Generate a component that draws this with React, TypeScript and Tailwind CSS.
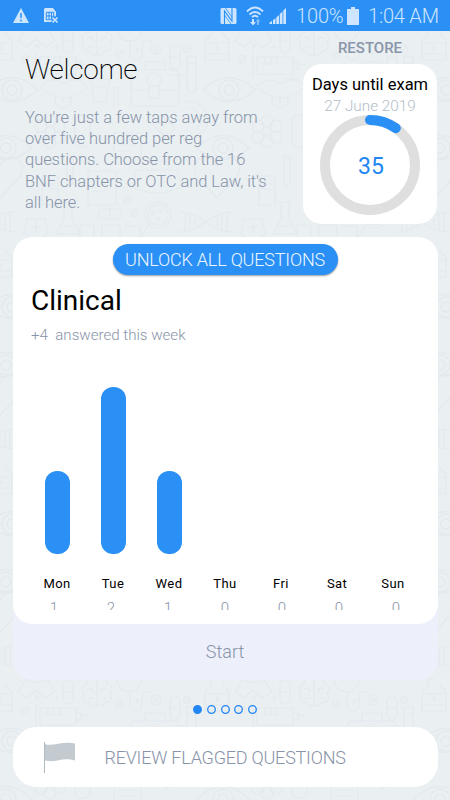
import React from 'react';

const week = [
  { day: 'Mon', count: 1 },
  { day: 'Tue', count: 2 },
  { day: 'Wed', count: 1 },
  { day: 'Thu', count: 0 },
  { day: 'Fri', count: 0 },
  { day: 'Sat', count: 0 },
  { day: 'Sun', count: 0 },
];

function MedicalPattern() {
  return (
    <svg className="absolute inset-0 h-full w-full" aria-hidden="true">
      <defs>
        <g id="cap">
          <rect x="-5" y="-12" width="10" height="24" rx="5" />
          <path d="M-5 0H5" />
        </g>
        <g id="pill">
          <circle r="3.5" />
          <path d="M-2 2L2 -2" />
        </g>
        <g id="tinyplus">
          <path d="M-2.5 0H2.5M0 -2.5V2.5" />
        </g>
        <g id="eye">
          <path d="M-26 0Q0 -25 26 0Q0 23 -26 0Z" />
          <circle r="10" />
          <circle r="5" />
        </g>
        <g id="tileart">
          <path d="M18 41l8-13q11 7 21 0l8 13-10 6-9-8-9 8z" />
          <use href="#cap" x="68" y="41" />
          <path d="M97 28v28M97 30c-5-5-11-1-10 3-6 1-6 7-3 9-3 5 0 10 5 9 2 5 7 5 8 2M97 30c5-5 11-1 10 3 6 1 6 7 3 9 3 5 0 10-5 9-2 5-7 5-8 2M87 38c3-2 6 0 6 3M107 38c-3-2-6 0-6 3M88 48q4-3 6 0M106 48q-4-3-6 0" />
          <path d="M118 27c-4 17 24 20 24 0M130 41v13c0 8 12 8 12 0v-8c0-6 8-7 10-3" />
          <circle cx="156" cy="49" r="5" />
          <circle cx="156" cy="49" r="2" />
          <use href="#pill" x="25" y="59" />
          <use href="#pill" x="119" y="54" />
          <use href="#tinyplus" x="37" y="46" />
          <use href="#tinyplus" x="57" y="47" />
          <use href="#tinyplus" x="137" y="50" />
          <path d="M40 57h36v17H40zM36 53v24M44 64h15M48 57v7M54 57v7M60 57v7M76 62h5v7h-5M81 65l9-1M67 79h15" />
          <use href="#cap" x="175" y="57" />
          <use href="#pill" x="187" y="49" />
          <path d="M211 28h12v7l6 5v20h-24V40l6-5zM205 43h24v11h-24M214 48h6M217 45v6" />
          <path d="M187 56h9v34q-5 6-9 0zM187 63h9M171 75h13" />
          <rect x="131" y="70" width="48" height="36" rx="4" />
          <path d="M145 70v-8h20v8M131 90h18M159 90h20M149 86h10v12h-10z" />
          <circle cx="154" cy="80" r="7" />
          <use href="#eye" x="229" y="90" />
          <use href="#eye" x="12" y="90" />
          <path d="M40 86q13-10 20-4 4 3 8 0 8-6 20 4-10 12-24 12T40 86zM55 96v7q8 10 16 0v-7M63 96v6" />
          <path d="M91 79h18l-3 23H94zM94 87h12M114 88v19M118 88v19M112 88h8" />
          <use href="#eye" x="6" y="148" />
          <use href="#eye" x="223" y="148" />
          <g transform="translate(50 131)">
            <circle r="5" /><circle cy="-10" r="6" /><circle cx="9" cy="-5" r="6" /><circle cx="9" cy="6" r="6" /><circle cy="11" r="6" /><circle cx="-9" cy="6" r="6" /><circle cx="-9" cy="-5" r="6" />
          </g>
          <path d="M114 133h27v31h-27zM118 139h19M118 145h19M118 151h14M118 157h19" />
          <path d="M186 101q18 1 21 15t-9 18M188 108q12 2 13 10t-6 11M152 124l14 14 9-9M162 115l12 12" />
          <path d="M75 118q12-7 15 2v23q-8 9-15 0zM97 119q-9-6-12 2" />
          <path d="M0 198l-19-20q-9-15 4-20 11-2 15 8 4-10 15-8 13 5 4 20z" />
          <path d="M217 198l-19-20q-9-15 4-20 11-2 15 8 4-10 15-8 13 5 4 20z" />
          <path d="M42 176h16v29H42zM45 184h10M45 189h10M88 171h28v34H88zM93 179h18M93 185h18M93 191h12" />
          <path d="M67 169v-11h6v25q-5 7-6 0zM65 156h10" />
          <use href="#pill" x="127" y="199" />
          <path d="M132 187q26 12 49 0l-4-17h-41zM142 170v-8h26v8" />
          <circle cx="158" cy="215" r="13" />
          <circle cx="158" cy="215" r="10" />
          <circle cx="153" cy="213" r="1.5" /><circle cx="161" cy="211" r="1.5" /><circle cx="158" cy="219" r="1.5" />
          <path d="M149 225l-8 12" />
          <rect x="98" y="209" width="24" height="10" rx="5" />
          <path d="M110 209v10" />
          <use href="#pill" x="134" y="213" />
          <path d="M180 212c23 0 28 20 53 20M180 232c23 0 28-20 53-20M185 213v18M190 214v16M195 218v8M217 218v8M222 214v16M227 212v19" />
          <path d="M64 202h8v17l8 15H56l8-15zM61 202h14M60 226h16" />
          <path d="M27 219h18l3 14-12 12-12-12zM36 222v10M31 227h10" />
          <path d="M80 225h14v18H80zM102 225h18v14h-18zM124 226h16v12h-16" />
        </g>
        <pattern id="medical" width="217" height="217" y="32" patternUnits="userSpaceOnUse">
          <g transform="translate(0 -32)" stroke="#e4e9ed" strokeWidth="1.15" fill="none" strokeLinecap="round" strokeLinejoin="round">
            <use href="#tileart" />
            <use href="#tileart" x="-217" />
            <use href="#tileart" y="217" />
            <use href="#tileart" y="-217" />
          </g>
        </pattern>
      </defs>
      <rect width="450" height="800" fill="url(#medical)" />
    </svg>
  );
}

function StatusBar() {
  return (
    <header className="relative flex h-[31px] items-center bg-[#2a90f5] text-[#cde5ff]">
      <svg className="ml-3 h-[17px] w-[18px]" viewBox="0 0 18 17">
        <path d="M9 1L17 16H1Z" fill="currentColor" />
        <path d="M9 6v5M9 12.5v2" stroke="#2a90f5" strokeWidth="1.5" />
      </svg>
      <svg className="ml-[13px] h-[17px] w-4" viewBox="0 0 16 17">
        <path d="M2 1h8l3 4v10H1V2z" fill="currentColor" />
        <path d="M3.3 5.3h7.4v7.4H3.3zM3.3 9h6M6 5v7M8.5 5v7" stroke="#2a90f5" strokeWidth="1" fill="none" />
        <path d="M9.5 9.5l5 6M14.5 9.5l-5 6" stroke="#2a90f5" strokeWidth="3.5" />
        <path d="M9.5 10.5l5 5M14.5 10.5l-5 5" stroke="currentColor" strokeWidth="1.6" />
      </svg>
      <svg className="ml-[161px] h-[18px] w-[17px]" viewBox="0 0 17 18">
        <path d="M2 1h13q1.5 0 1.5 1.5v13q0 1.5-1.5 1.5H2Q.5 17 .5 15.5v-13Q.5 1 2 1z" fill="currentColor" />
        <path d="M4.500 17V4L12 14V1" fill="none" stroke="#2a90f5" strokeWidth="1.100" />
        <path d="M5.500 1L12 10M4.500 8l6.500 9" fill="none" stroke="#2a90f5" strokeWidth=".8" />
      </svg>
      <svg className="ml-[9px] h-[20px] w-[18px]" viewBox="0 0 18 20">
        <path d="M1 5.5q8-8 16 0M3.5 8.5q5.5-5 11 0M6 11q3-2.5 6 0" fill="none" stroke="currentColor" strokeWidth="1.9" />
        <path d="M6 13v3H4l3 3.5 3-3.5H8v-3" fill="currentColor" />
        <path d="M11 19v-3.5H9.5L12 12.500l2.500 3H13V19" fill="#7fbdfa" />
      </svg>
      <svg className="ml-[5px] h-[18px] w-[18px]" viewBox="0 0 18 18">
        <path d="M.5 17v-1.5L3 14v3zM4 17v-4l2.5-1.8V17zM7.3 17V10.5L10 8v9zM10.8 17V7l2.7-2.5V17zM14.3 17V3.5L17 1v16z" fill="currentColor" />
      </svg>
      <span className="ml-[9px] w-[47px] whitespace-nowrap text-[20px] font-light leading-none tracking-[-0.15px]">100%</span>
      <svg className="ml-[4px] h-[18px] w-3" viewBox="0 0 12 18">
        <path d="M4 0h4v2h4v16H0V2h4z" fill="currentColor" />
      </svg>
      <span className="ml-[9px] whitespace-nowrap text-[20px] font-light leading-none tracking-[-0.2px]">1:04 AM</span>
    </header>
  );
}

function ExamCountdown() {
  return (
    <section className="mr-[13px] w-[134px] shrink-0 text-center">
      <div className="h-[33px] pt-[9px] text-[15px] font-medium leading-4 text-[#8995a8]">RESTORE</div>
      <div className="h-[160px] rounded-[19px] bg-white pt-[11px]">
        <h2 className="whitespace-nowrap text-[16.5px] font-normal leading-[20px] text-black">Days until exam</h2>
        <p className="h-[20px] pt-px text-[15.3px] font-light leading-[20px] text-[#b3bec9]">27 June 2019</p>
        <svg className="mx-auto block h-[100px] w-[100px]" viewBox="0 0 100 100">
          <circle cx="50" cy="50" r="45" fill="none" stroke="#dfdfdf" strokeWidth="10" />
          <path d="M50 5A45 45 0 0 1 75.8 13.2" fill="none" stroke="#2a90f5" strokeWidth="10" strokeLinecap="round" />
          <text x="51" y="59" textAnchor="middle" fontSize="23" fill="#2186f3">35</text>
        </svg>
      </div>
    </section>
  );
}

export default function App() {
  return (
    <div className="relative h-[800px] w-[450px] overflow-hidden bg-[#eaeff2] font-['Roboto',sans-serif]">
      <MedicalPattern />
      <div className="relative flex h-full flex-col">
        <StatusBar />
        <section className="flex h-[206px] shrink-0 justify-between">
          <div className="ml-[25px] w-[260px] pt-[23px]">
            <h1 className="text-[28px] font-extralight leading-8 tracking-[-0.25px] text-black">Welcome</h1>
            <p className="mt-[21px] whitespace-nowrap text-[16.5px] font-light leading-[21.2px] tracking-[-0.06px] text-[#8793a8]">
              You're just a few taps away from<br />
              over five hundred per reg<br />
              questions. Choose from the 16<br />
              BNF chapters or OTC and Law, it's<br />
              all here.
            </p>
          </div>
          <ExamCountdown />
        </section>
        <main className="ml-[12.5px] h-[443px] w-[425px] shrink-0 rounded-[20px] bg-[#edeffb]">
          <section className="h-[387px] rounded-[20px] bg-white pt-[7px]">
            <button className="mx-auto block h-[31px] w-[225px] rounded-full bg-[#2a90f5] text-[18px] font-light leading-[31px] tracking-[-0.2px] text-[#edf6ff] shadow-[0_1px_2px_#0006]">UNLOCK ALL QUESTIONS</button>
            <h2 className="ml-[18.5px] mt-[10px] text-[28px] font-normal leading-8 text-black">Clinical</h2>
            <p className="ml-[18.5px] mt-[8px] whitespace-pre text-[15.1px] font-light leading-5 text-[#8793a8]">+4  answered this week</p>
            <div className="ml-[16.5px] mt-[42px] grid w-[392px] grid-cols-7">
              {week.map(({ day, count }) => (
                <div key={day} className="flex flex-col items-center">
                  <div className="flex h-[167px] items-end">
                    <div className="w-[25px] rounded-[12px] bg-[#2a90f5]" style={{ height: count * 83.5 }} />
                  </div>
                  <span className="mt-[21.5px] text-[13px] leading-4 tracking-[0.4px] text-black">{day}</span>
                </div>
              ))}
            </div>
            <div className="ml-[13px] mt-[7px] grid h-[11.5px] w-[399px] grid-cols-7 overflow-hidden text-center text-[15px] font-light leading-[19px] text-[#8793a8]">
              {week.map(({ day, count }) => (
                <span key={day}>{count}</span>
              ))}
            </div>
          </section>
          <button className="block h-[56px] w-full text-[18px] font-light leading-[54px] text-[#8793a8]">Start</button>
        </main>
        <div className="flex h-[47px] shrink-0 items-center justify-center gap-[4.7px] pt-[12px]">
          {[0, 1, 2, 3, 4].map((page) => (
            <svg key={page} className="h-[9px] w-[9px]" viewBox="0 0 9 9">
              <circle cx="4.5" cy="4.5" r="3.8" fill={page === 0 ? '#2186f3' : 'none'} stroke="#2186f3" strokeWidth="1.3" />
            </svg>
          ))}
        </div>
        <button className="ml-[12.5px] flex h-[60px] w-[425px] shrink-0 items-center rounded-[24px] bg-white">
          <svg className="ml-[30px] h-8 w-[33px]" viewBox="0 0 33 32">
            <path d="M1.5 1v31" stroke="#aebbc1" strokeWidth="1" />
            <path d="M2 3c7 3 17-3 30-.5v17c-14-4-18 3-30 0z" fill="#c3cbd0" />
          </svg>
          <span className="ml-[29px] whitespace-nowrap text-[18px] font-light tracking-[-0.22px] text-[#8793a8]">REVIEW FLAGGED QUESTIONS</span>
        </button>
      </div>
    </div>
  );
}
